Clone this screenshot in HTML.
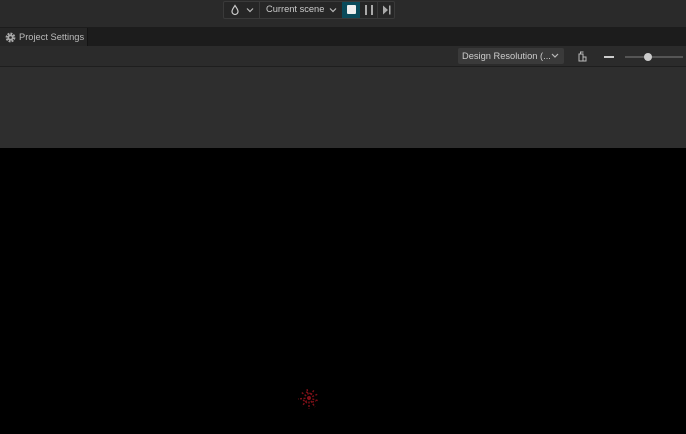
<!DOCTYPE html>
<html><head><style>
*{margin:0;padding:0;box-sizing:border-box}
body{width:686px;height:434px;background:#000;position:relative;overflow:hidden;font-family:"Liberation Sans",sans-serif;font-size:9.3px;color:#ccc}
.a{position:absolute;white-space:nowrap}
</style></head><body>
<div class="a" style="left:0;top:0;width:686px;height:27px;background:#2a2a2a"></div>
<div class="a" style="left:0;top:27px;width:686px;height:19px;background:#1c1c1c"></div>
<div class="a" style="left:0;top:28px;width:88px;height:18px;background:#262626;border-right:1px solid #141414"></div>
<svg class="a" style="left:5px;top:32px" width="11" height="11" viewBox="0 0 11 11"><circle cx="5.5" cy="5.5" r="3.6" fill="none" stroke="#aaa" stroke-width="2.6" stroke-dasharray="1.8 1"/><circle cx="5.5" cy="5.5" r="3" fill="#aaa"/><circle cx="5.5" cy="5.5" r="1.3" fill="#262626"/></svg>
<div class="a" style="left:19px;top:32px;color:#bbb">Project Settings</div>
<div class="a" style="left:0;top:46px;width:686px;height:20px;background:#2b2b2b"></div>
<div class="a" style="left:0;top:66px;width:686px;height:1px;background:#1e1e1e"></div>
<div class="a" style="left:0;top:67px;width:686px;height:81px;background:#2e2e2e"></div>
<div class="a" style="left:223px;top:1px;width:172px;height:18px;border:1px solid #3a3a3a;border-radius:2px;background:#262626"></div>
<div class="a" style="left:259px;top:2px;width:1px;height:16px;background:#3a3a3a"></div>
<svg class="a" style="left:229px;top:4px" width="12" height="12" viewBox="0 0 12 12"><path d="M6 1.5C4.5 4 3 5.5 3 7.5a3 3 0 0 0 6 0C9 5.5 7.5 4 6 1.5z" fill="none" stroke="#ccc" stroke-width="1.2"/></svg>
<svg class="a" style="left:246px;top:7px" width="8" height="6"><path d="M1 1.5l3 3 3-3" fill="none" stroke="#bbb" stroke-width="1.2"/></svg>
<div class="a" style="left:266px;top:4px;color:#ccc">Current scene</div>
<svg class="a" style="left:329px;top:7px" width="8" height="6"><path d="M1 1.5l3 3 3-3" fill="none" stroke="#bbb" stroke-width="1.2"/></svg>
<div class="a" style="left:342px;top:2px;width:18px;height:16px;background:#0a4a5a"></div>
<div class="a" style="left:347px;top:5px;width:9px;height:9px;background:#eee;border-radius:1px"></div>
<div class="a" style="left:365px;top:5px;width:2px;height:10px;background:#aaa"></div>
<div class="a" style="left:371px;top:5px;width:2px;height:10px;background:#aaa"></div>
<div class="a" style="left:377px;top:2px;width:1px;height:16px;background:#3a3a3a"></div>
<svg class="a" style="left:382px;top:5px" width="10" height="10"><path d="M1 0.5v9l5-4.5z" fill="#aaa"/><rect x="7" y="0.5" width="1.5" height="9" fill="#aaa"/></svg>
<div class="a" style="left:458px;top:48px;width:106px;height:16px;background:#3a3a3a;border-radius:2px"></div>
<div class="a" style="left:462px;top:51px;color:#ccc">Design Resolution (...</div>
<svg class="a" style="left:551px;top:53px" width="8" height="6"><path d="M1 1l3 3 3-3" fill="none" stroke="#bbb" stroke-width="1.2"/></svg>
<svg class="a" style="left:577px;top:50px" width="11" height="12"><path d="M2 4h4v7H2zM6 7h3v4H6M3.5 4V2h3" fill="none" stroke="#bbb" stroke-width="1"/></svg>
<div class="a" style="left:604px;top:56px;width:10px;height:2px;background:#ccc"></div>
<div class="a" style="left:625px;top:56px;width:58px;height:2px;background:#555"></div>
<div class="a" style="left:644px;top:53px;width:8px;height:8px;border-radius:50%;background:#ccc"></div>
<svg class="a" style="left:294px;top:386px" width="30" height="28" viewBox="0 0 30 28">
<g stroke="#801018" stroke-width="1.4" stroke-dasharray="2 1.5">
<path d="M15 12l-8-6M15 12l-2-9M15 12l5-8M15 12l9-4M15 12l10 3M15 12l6 9M15 12l0 11M15 12l-7 8M15 12l-11 1M12 6l6 2M9 14l4 3M18 16l4-1"/>
</g></svg>
</body></html>
